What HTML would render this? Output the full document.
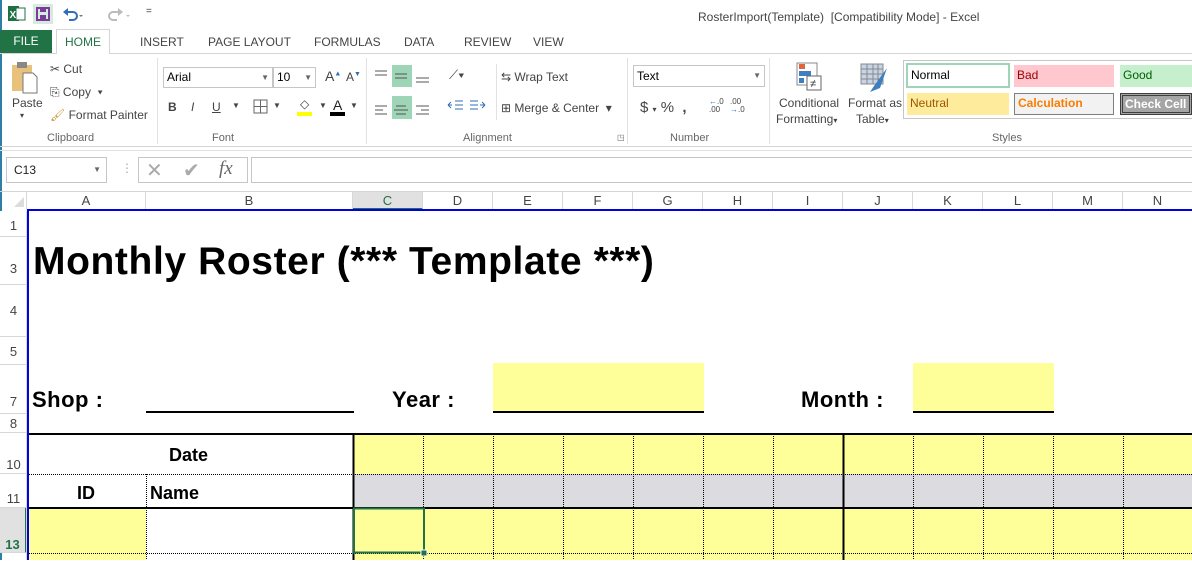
<!DOCTYPE html>
<html><head><meta charset="utf-8">
<style>
*{margin:0;padding:0;box-sizing:border-box}
body{width:1192px;height:560px;overflow:hidden;background:#fff;font-family:"Liberation Sans",Arial,sans-serif;position:relative;color:#444}
.a{position:absolute}
.t{font-size:12px;color:#444;white-space:nowrap}
.grp{font-size:11px;color:#666}
.sep{position:absolute;width:1px;background:#e1e1e1}
.ch{position:absolute;top:192px;height:18px;font-size:13px;color:#444;text-align:center;line-height:18px;border-right:1px solid #d8d8d8}
.rh{position:absolute;left:0;width:27px;font-size:13px;color:#444;text-align:center;border-bottom:1px solid #d8d8d8;background:#fff}
.b{font-weight:bold;color:#000;font-size:22px;letter-spacing:0.5px;white-space:pre}
</style></head><body>
<div class="a" style="left:0;top:0;width:2px;height:560px;background:#2f7ea5"></div>
<svg class="a" style="left:8px;top:5px" width="18" height="18"><rect x="0" y="1" width="11" height="15" fill="#1e7145"/><rect x="8" y="3" width="9" height="12" fill="#fff" stroke="#1e7145"/><text x="1.5" y="13" font-size="10" fill="#fff" font-family="Liberation Sans" font-weight="bold">X</text></svg>
<div class="a" style="left:33px;top:4px;width:20px;height:20px;background:#d5ebe0"></div>
<svg class="a" style="left:36px;top:7px" width="14" height="14"><rect x="1" y="1" width="12" height="12" fill="none" stroke="#7a3c96" stroke-width="2"/><rect x="4" y="1" width="6" height="4" fill="#7a3c96"/><rect x="4" y="8" width="6" height="4" fill="#7a3c96"/></svg>
<svg class="a" style="left:62px;top:6px" width="36" height="16"><path d="M4 6 H11 A4 4 0 0 1 11 14 H7" fill="none" stroke="#2f6fb5" stroke-width="2"/><path d="M1 6 L6 2 L6 10 Z" fill="#2f6fb5"/><path d="M17 9 L21 9 L19 11Z" fill="#777"/></svg>
<svg class="a" style="left:106px;top:6px" width="30" height="16"><path d="M14 6 H7 A4 4 0 0 0 7 14 H11" fill="none" stroke="#bbb" stroke-width="2"/><path d="M17 6 L12 2 L12 10 Z" fill="#bbb"/><path d="M20 9 L24 9 L22 11Z" fill="#bbb"/></svg>
<div class="a t" style="left:146px;top:6px;font-size:10px">=</div>
<div class="a t" style="left:698px;top:10px;font-size:12px;color:#444">RosterImport(Template)&nbsp; [Compatibility Mode] - Excel</div>
<div class="a" style="left:0;top:30px;width:52px;height:23px;background:#217346;color:#fff;font-size:12px;line-height:23px;text-align:center">FILE</div>
<div class="a" style="left:56px;top:29px;width:54px;height:25px;border:1px solid #d5d5d5;border-bottom:none;background:#fff;color:#217346;font-size:12px;line-height:24px;text-align:center;z-index:2">HOME</div>
<div class="a" style="left:0;top:53px;width:1192px;height:1px;background:#d5d5d5"></div>
<div class="a t" style="left:140px;top:35px">INSERT</div>
<div class="a t" style="left:208px;top:35px">PAGE LAYOUT</div>
<div class="a t" style="left:314px;top:35px">FORMULAS</div>
<div class="a t" style="left:404px;top:35px">DATA</div>
<div class="a t" style="left:464px;top:35px">REVIEW</div>
<div class="a t" style="left:533px;top:35px">VIEW</div>
<div class="a" style="left:0;top:146px;width:1192px;height:1px;background:#d5d5d5"></div>
<svg class="a" style="left:11px;top:61px" width="28" height="34"><rect x="1" y="4" width="20" height="26" fill="#e8c27a"/><rect x="6" y="1" width="10" height="6" fill="#888"/><path d="M12 12 H22 L26 16 V32 H12Z" fill="#fff" stroke="#777"/></svg>
<div class="a t" style="left:12px;top:96px">Paste</div>
<div class="a t" style="left:20px;top:111px;font-size:8px">▾</div>
<div class="a t" style="left:50px;top:62px">✂ Cut</div>
<div class="a t" style="left:50px;top:85px">⎘ Copy&nbsp;&nbsp;▾</div>
<div class="a t" style="left:50px;top:108px"><span style="color:#c9953a">🖌</span> Format Painter</div>
<div class="a grp" style="left:47px;top:132px">Clipboard</div>
<div class="sep" style="left:157px;top:58px;height:86px"></div>
<div class="a" style="left:163px;top:67px;width:110px;height:21px;border:1px solid #c6c6c6;font-size:12px;line-height:19px;padding-left:3px;color:#000">Arial<span style="position:absolute;right:3px;font-size:8px;color:#666">▼</span></div>
<div class="a" style="left:273px;top:67px;width:43px;height:21px;border:1px solid #c6c6c6;font-size:12px;line-height:19px;padding-left:3px;color:#000">10<span style="position:absolute;right:3px;font-size:8px;color:#666">▼</span></div>
<div class="a t" style="left:325px;top:68px;font-size:14px">A<sup style="font-size:7px;color:#2f6fb5">▲</sup></div>
<div class="a t" style="left:346px;top:70px;font-size:12px">A<sup style="font-size:7px;color:#2f6fb5">▼</sup></div>
<div class="a t" style="left:168px;top:100px;font-weight:bold">B</div>
<div class="a t" style="left:191px;top:100px;font-style:italic">I</div>
<div class="a t" style="left:212px;top:100px;text-decoration:underline">U</div>
<div class="a t" style="left:232px;top:101px;font-size:8px">▼</div>
<svg class="a" style="left:253px;top:99px" width="16" height="16"><rect x="1" y="1" width="13" height="13" fill="none" stroke="#666"/><path d="M7.5 1V14M1 7.5H14" stroke="#666"/></svg>
<div class="a t" style="left:273px;top:101px;font-size:8px">▼</div>
<div class="a" style="left:297px;top:112px;width:15px;height:4px;background:#ff0"></div>
<div class="a t" style="left:300px;top:97px;font-size:12px">◇</div>
<div class="a t" style="left:319px;top:101px;font-size:8px">▼</div>
<div class="a t" style="left:333px;top:97px;font-size:14px;color:#222">A</div>
<div class="a" style="left:330px;top:112px;width:15px;height:4px;background:#000"></div>
<div class="a t" style="left:350px;top:101px;font-size:8px">▼</div>
<div class="a grp" style="left:212px;top:132px">Font</div>
<div class="sep" style="left:366px;top:58px;height:86px"></div>
<div class="a" style="left:392px;top:65px;width:20px;height:22px;background:#9fd5b7"></div>
<div class="a" style="left:392px;top:96px;width:20px;height:23px;background:#9fd5b7"></div>
<svg class="a" style="left:372px;top:66px" width="64" height="56"><g stroke="#555" stroke-width="1"><path d="M3 5H15M3 9H15M23 8H35M23 12H35M44 12H57M44 16H57"/><path d="M3 40H15M3 44H11M3 48H15M24 40H34M22 44H36M24 48H34M44 40H57M49 44H57M44 48H57"/></g></svg>
<div class="a t" style="left:449px;top:67px;font-size:13px">⟋▾</div>
<svg class="a" style="left:447px;top:99px" width="40" height="14"><path d="M1 6H5M8 2H16M8 6H16M8 10H16M1 6L4 3M1 6L4 9" stroke="#2f6fb5" fill="none"/><path d="M23 2H31M23 6H31M23 10H31M33 6H38M38 6L35 3M38 6L35 9" stroke="#2f6fb5" fill="none"/></svg>
<div class="sep" style="left:496px;top:64px;height:56px"></div>
<div class="a t" style="left:501px;top:70px">⇆ Wrap Text</div>
<div class="a t" style="left:501px;top:101px">⊞ Merge &amp; Center&nbsp; ▾</div>
<div class="a grp" style="left:463px;top:132px">Alignment</div>
<div class="a grp" style="left:617px;top:133px;font-size:8px">◳</div>
<div class="sep" style="left:627px;top:58px;height:86px"></div>
<div class="a" style="left:633px;top:65px;width:132px;height:22px;border:1px solid #c6c6c6;font-size:12px;line-height:20px;padding-left:3px;color:#000">Text<span style="position:absolute;right:3px;font-size:8px;color:#666">▼</span></div>
<div class="a t" style="left:640px;top:99px;font-size:15px">$&nbsp;<span style="font-size:8px">▾</span>&nbsp;%&nbsp;&nbsp;<b>,</b></div>
<div class="a t" style="left:709px;top:98px;font-size:8px;line-height:8px;color:#444"><span style="color:#2f6fb5">←</span>.0<br>.00</div>
<div class="a t" style="left:730px;top:98px;font-size:8px;line-height:8px;color:#444">.00<br><span style="color:#2f6fb5">→</span>.0</div>
<div class="a grp" style="left:670px;top:132px">Number</div>
<div class="sep" style="left:769px;top:58px;height:86px"></div>
<svg class="a" style="left:795px;top:62px" width="28" height="32"><rect x="2" y="1" width="20" height="22" fill="#fff" stroke="#888"/><rect x="4" y="2" width="6" height="5" fill="#e0643c"/><rect x="4" y="9" width="12" height="5" fill="#3f7fc0"/><rect x="4" y="16" width="5" height="5" fill="#3f7fc0"/><rect x="12" y="14" width="14" height="14" fill="#fff" stroke="#666"/><text x="15" y="25" font-size="11" fill="#333">≠</text></svg>
<div class="a t" style="left:779px;top:96px">Conditional</div>
<div class="a t" style="left:776px;top:112px">Formatting<span style="font-size:8px">▾</span></div>
<svg class="a" style="left:860px;top:62px" width="30" height="32"><rect x="1" y="2" width="22" height="20" fill="#c7d3e6" stroke="#888"/><path d="M1 7H23M1 12H23M1 17H23M7 2V22M13 2V22M18 2V22" stroke="#888"/><path d="M27 6L14 24L10 30L20 26Z" fill="#3f7fc0"/></svg>
<div class="a t" style="left:848px;top:96px">Format as</div>
<div class="a t" style="left:856px;top:112px">Table<span style="font-size:8px">▾</span></div>
<div class="a" style="left:903px;top:60px;width:289px;height:59px;border:1px solid #c6c6c6;border-right:none"></div>
<div class="a" style="left:906px;top:63px;width:104px;height:25px;border:2px solid #9fd5b7;background:#fff;color:#000;font-size:12px;padding:3px 3px">Normal</div>
<div class="a" style="left:1014px;top:65px;width:100px;height:22px;background:#ffc7ce;color:#9c0006;font-size:12px;padding:3px 3px">Bad</div>
<div class="a" style="left:1120px;top:65px;width:72px;height:22px;background:#c6efce;color:#006100;font-size:12px;padding:3px 3px">Good</div>
<div class="a" style="left:907px;top:93px;width:102px;height:22px;background:#ffeb9c;color:#9c5700;font-size:12px;padding:3px 3px">Neutral</div>
<div class="a" style="left:1014px;top:93px;width:100px;height:22px;background:#f2f2f2;border:1px solid #7f7f7f;color:#fa7d00;font-size:12px;font-weight:bold;padding:2px 3px">Calculation</div>
<div class="a" style="left:1120px;top:93px;width:72px;height:22px;background:#a5a5a5;border:3px double #3f3f3f;color:#fff;font-size:12px;font-weight:bold;padding:1px 2px">Check Cell</div>
<div class="a grp" style="left:992px;top:132px">Styles</div>
<div class="a" style="left:0;top:150px;width:1192px;height:1px;background:#e1e1e1"></div>
<div class="a" style="left:6px;top:157px;width:101px;height:26px;border:1px solid #c6c6c6;font-size:12px;line-height:24px;padding-left:7px;color:#222">C13<span style="position:absolute;right:5px;font-size:8px;color:#666">▼</span></div>
<div class="a t" style="left:121px;top:161px;color:#aaa">⋮</div>
<div class="a" style="left:138px;top:157px;width:110px;height:26px;border:1px solid #c6c6c6"></div>
<div class="a" style="left:146px;top:158px;font-size:20px;color:#aaa">✕</div>
<div class="a" style="left:183px;top:158px;font-size:20px;color:#aaa">✔</div>
<div class="a" style="left:219px;top:158px;font-size:19px;color:#666;font-family:'Liberation Serif',serif;font-style:italic">fx</div>
<div class="a" style="left:251px;top:157px;width:941px;height:26px;border:1px solid #c6c6c6;border-right:none"></div>
<div class="a" style="left:0;top:191px;width:1192px;height:1px;background:#d5d5d5"></div>
<div class="a" style="left:0;top:192px;width:27px;height:18px;border-right:1px solid #d8d8d8"></div>
<svg class="a" style="left:14px;top:197px" width="10" height="10"><path d="M10 0V10H0Z" fill="#dcdcdc"/></svg>
<div class="ch" style="left:27px;width:119px">A</div>
<div class="ch" style="left:146px;width:207px">B</div>
<div class="ch" style="left:353px;width:70px;background:#e1e1e1;color:#217346;border-bottom:2px solid #217346">C</div>
<div class="ch" style="left:423px;width:70px">D</div>
<div class="ch" style="left:493px;width:70px">E</div>
<div class="ch" style="left:563px;width:70px">F</div>
<div class="ch" style="left:633px;width:70px">G</div>
<div class="ch" style="left:703px;width:70px">H</div>
<div class="ch" style="left:773px;width:70px">I</div>
<div class="ch" style="left:843px;width:70px">J</div>
<div class="ch" style="left:913px;width:70px">K</div>
<div class="ch" style="left:983px;width:70px">L</div>
<div class="ch" style="left:1053px;width:70px">M</div>
<div class="ch" style="left:1123px;width:70px">N</div>
<div class="a" style="left:27px;top:209px;width:1165px;height:2px;background:#0000e0"></div>
<div class="a" style="left:27px;top:209px;width:2px;height:351px;background:#0000e0"></div>
<div class="rh" style="top:211px;height:26px;line-height:30px">1</div>
<div class="rh" style="top:237px;height:48px;line-height:64px">3</div>
<div class="rh" style="top:285px;height:52px;line-height:52px">4</div>
<div class="rh" style="top:337px;height:28px;line-height:30px">5</div>
<div class="rh" style="top:365px;height:49px;line-height:74px">7</div>
<div class="rh" style="top:414px;height:19px;line-height:20px">8</div>
<div class="rh" style="top:433px;height:41px;line-height:64px">10</div>
<div class="rh" style="top:474px;height:34px;line-height:50px">11</div>
<div class="rh" style="top:508px;height:45px;line-height:74px;background:#e1e1e1;color:#217346;font-weight:bold;border-right:2px solid #217346">13</div>
<div class="a" style="left:26px;top:211px;width:1px;height:349px;background:#d8d8d8"></div>
<div class="a" style="left:33px;top:240px;font-size:39px;font-weight:bold;color:#000;letter-spacing:0.6px;white-space:nowrap">Monthly Roster (*** Template ***)</div>
<div class="a b" style="left:32px;top:387px">Shop :</div>
<div class="a" style="left:146px;top:411px;width:208px;height:2px;background:#000"></div>
<div class="a b" style="left:392px;top:387px">Year :</div>
<div class="a" style="left:493px;top:363px;width:211px;height:50px;background:#ffff99;border-bottom:2px solid #000"></div>
<div class="a b" style="left:801px;top:387px">Month :</div>
<div class="a" style="left:913px;top:363px;width:141px;height:50px;background:#ffff99;border-bottom:2px solid #000"></div>
<div class="a" style="left:353px;top:434px;width:839px;height:40px;background:#ffff99"></div>
<div class="a" style="left:353px;top:474px;width:839px;height:34px;background:#dcdbdf"></div>
<div class="a" style="left:353px;top:508px;width:839px;height:52px;background:#ffff99"></div>
<div class="a" style="left:29px;top:508px;width:117px;height:52px;background:#ffff99"></div>
<svg class="a" style="left:0;top:0" width="1192" height="560">
<g stroke="#000" stroke-width="1" stroke-dasharray="1,1">
<path d="M29 474.5H1192M29 553.5H1192"/>
<path d="M146.5 474V560"/>
<path d="M423.5 434V560M493.5 434V560M563.5 434V560M633.5 434V560M703.5 434V560M773.5 434V560M913.5 434V560M983.5 434V560M1053.5 434V560M1123.5 434V560"/>
</g>
<g stroke="#000" stroke-width="2">
<path d="M29 434H1192M29 508H1192M353.5 433V560M843.5 433V560"/>
</g>
<rect x="354" y="508.5" width="70" height="44" fill="none" stroke="#217346" stroke-width="2"/>
<rect x="421" y="550" width="6" height="6" fill="#217346" stroke="#fff"/>
</svg>
<div class="a" style="left:169px;top:445px;font-size:18px;font-weight:bold;color:#000">Date</div>
<div class="a" style="left:77px;top:483px;font-size:18px;font-weight:bold;color:#000">ID</div>
<div class="a" style="left:150px;top:483px;font-size:18px;font-weight:bold;color:#000">Name</div>
</body></html>
